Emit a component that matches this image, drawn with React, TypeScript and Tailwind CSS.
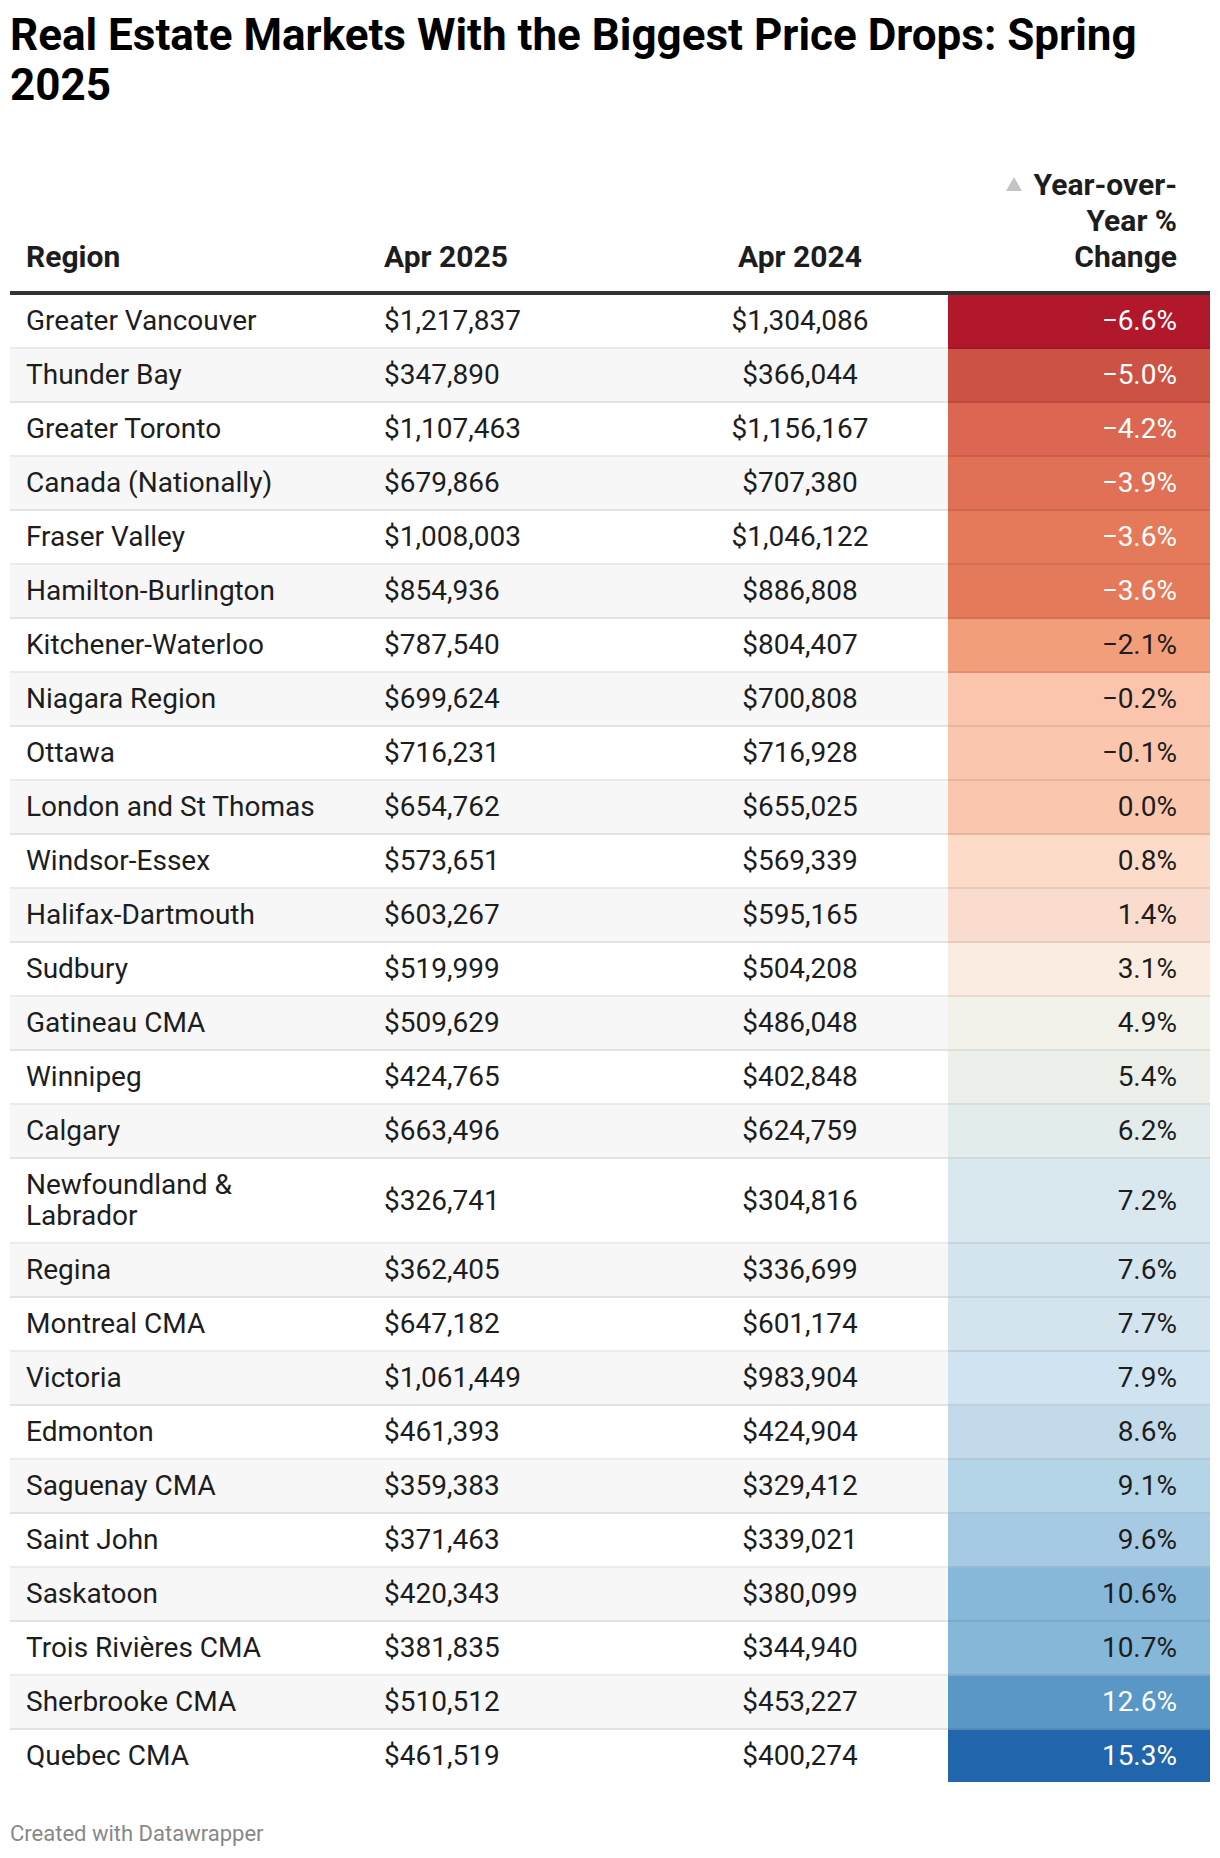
import React from "react";

type Row = {
  region: string;
  apr2025: string;
  apr2024: string;
  change: string;
  bg: string;
  light?: boolean;
};

const rows: Row[] = [
  { region: "Greater Vancouver", apr2025: "$1,217,837", apr2024: "$1,304,086", change: "−6.6%", bg: "bg-[#b2182b]", light: true },
  { region: "Thunder Bay", apr2025: "$347,890", apr2024: "$366,044", change: "−5.0%", bg: "bg-[#cc5243]", light: true },
  { region: "Greater Toronto", apr2025: "$1,107,463", apr2024: "$1,156,167", change: "−4.2%", bg: "bg-[#db6651]", light: true },
  { region: "Canada (Nationally)", apr2025: "$679,866", apr2024: "$707,380", change: "−3.9%", bg: "bg-[#e07056]", light: true },
  { region: "Fraser Valley", apr2025: "$1,008,003", apr2024: "$1,046,122", change: "−3.6%", bg: "bg-[#e57a5b]", light: true },
  { region: "Hamilton-Burlington", apr2025: "$854,936", apr2024: "$886,808", change: "−3.6%", bg: "bg-[#e57a5b]", light: true },
  { region: "Kitchener-Waterloo", apr2025: "$787,540", apr2024: "$804,407", change: "−2.1%", bg: "bg-[#f29e7b]" },
  { region: "Niagara Region", apr2025: "$699,624", apr2024: "$700,808", change: "−0.2%", bg: "bg-[#fac5ac]" },
  { region: "Ottawa", apr2025: "$716,231", apr2024: "$716,928", change: "−0.1%", bg: "bg-[#fac6ad]" },
  { region: "London and St Thomas", apr2025: "$654,762", apr2024: "$655,025", change: "0.0%", bg: "bg-[#f9c7ae]" },
  { region: "Windsor-Essex", apr2025: "$573,651", apr2024: "$569,339", change: "0.8%", bg: "bg-[#fcdbc8]" },
  { region: "Halifax-Dartmouth", apr2025: "$603,267", apr2024: "$595,165", change: "1.4%", bg: "bg-[#fadcce]" },
  { region: "Sudbury", apr2025: "$519,999", apr2024: "$504,208", change: "3.1%", bg: "bg-[#faece0]" },
  { region: "Gatineau CMA", apr2025: "$509,629", apr2024: "$486,048", change: "4.9%", bg: "bg-[#f2f2eb]" },
  { region: "Winnipeg", apr2025: "$424,765", apr2024: "$402,848", change: "5.4%", bg: "bg-[#ecefea]" },
  { region: "Calgary", apr2025: "$663,496", apr2024: "$624,759", change: "6.2%", bg: "bg-[#e3ecec]" },
  { region: "Newfoundland & Labrador", apr2025: "$326,741", apr2024: "$304,816", change: "7.2%", bg: "bg-[#d9e7ef]" },
  { region: "Regina", apr2025: "$362,405", apr2024: "$336,699", change: "7.6%", bg: "bg-[#d4e5ef]" },
  { region: "Montreal CMA", apr2025: "$647,182", apr2024: "$601,174", change: "7.7%", bg: "bg-[#d3e4ef]" },
  { region: "Victoria", apr2025: "$1,061,449", apr2024: "$983,904", change: "7.9%", bg: "bg-[#d0e3f0]" },
  { region: "Edmonton", apr2025: "$461,393", apr2024: "$424,904", change: "8.6%", bg: "bg-[#c2daea]" },
  { region: "Saguenay CMA", apr2025: "$359,383", apr2024: "$329,412", change: "9.1%", bg: "bg-[#b4d4e7]" },
  { region: "Saint John", apr2025: "$371,463", apr2024: "$339,021", change: "9.6%", bg: "bg-[#a6cae3]" },
  { region: "Saskatoon", apr2025: "$420,343", apr2024: "$380,099", change: "10.6%", bg: "bg-[#87b8da]" },
  { region: "Trois Rivières CMA", apr2025: "$381,835", apr2024: "$344,940", change: "10.7%", bg: "bg-[#85b7d9]" },
  { region: "Sherbrooke CMA", apr2025: "$510,512", apr2024: "$453,227", change: "12.6%", bg: "bg-[#5897c6]", light: true },
  { region: "Quebec CMA", apr2025: "$461,519", apr2024: "$400,274", change: "15.3%", bg: "bg-[#2166ac]", light: true },
];

const cols = "grid grid-cols-[358px_284px_296px_262px]";

export default function App() {
  return (
    <div className="w-[1220px] min-h-[1858px] bg-white px-[10px] pt-[10px] font-['Roboto','Liberation_Sans',sans-serif] text-[#1d1d1d]">
      <h1 className="text-[44px] font-bold leading-[50px] text-black">
        Real Estate Markets With the Biggest Price Drops: Spring 2025
      </h1>

      <div className="mt-[53px]">
        {/* header */}
        <div className={`${cols} items-end border-b-4 border-[#333333] text-[30px] font-bold leading-[36px]`}>
          <div className="pb-[16px] pl-[16px]">Region</div>
          <div className="pb-[16px] pl-[16px]">Apr 2025</div>
          <div className="pb-[16px] text-center">Apr 2024</div>
          <div className="pb-[16px] pr-[33px] text-right">
            <span className="inline-flex items-center gap-[12px]">
              <svg width="16" height="14" viewBox="0 0 16 14" className="mt-[-2px]">
                <polygon points="8,0 16,14 0,14" fill="#c4c4c4" />
              </svg>
              Year-over-
            </span>
            <br />
            Year %
            <br />
            Change
          </div>
        </div>

        {/* body */}
        {rows.map((r, i) => {
          const line = i < rows.length - 1 ? "border-b-2 border-black/[0.08]" : "";
          return (
            <div
              key={r.region}
              className={`${cols} text-[28px] leading-[31px] ${i % 2 === 1 ? "bg-[#f7f7f7]" : "bg-white"}`}
            >
              <div className={`flex items-center pl-[16px] pr-[30px] pt-[10px] pb-[11px] ${line}`}>{r.region}</div>
              <div className={`flex items-center pl-[16px] pt-[10px] pb-[11px] ${line}`}>{r.apr2025}</div>
              <div className={`flex items-center justify-center pt-[10px] pb-[11px] ${line}`}>{r.apr2024}</div>
              <div
                className={`flex items-center justify-end pr-[33px] pt-[10px] pb-[11px] ${r.bg} ${r.light ? "text-white" : "text-[#1d1d1d]"} ${line}`}
              >
                {r.change}
              </div>
            </div>
          );
        })}
      </div>

      <div className="mt-[39px] text-[22px] leading-[26px] text-[#888888]">Created with Datawrapper</div>
    </div>
  );
}
